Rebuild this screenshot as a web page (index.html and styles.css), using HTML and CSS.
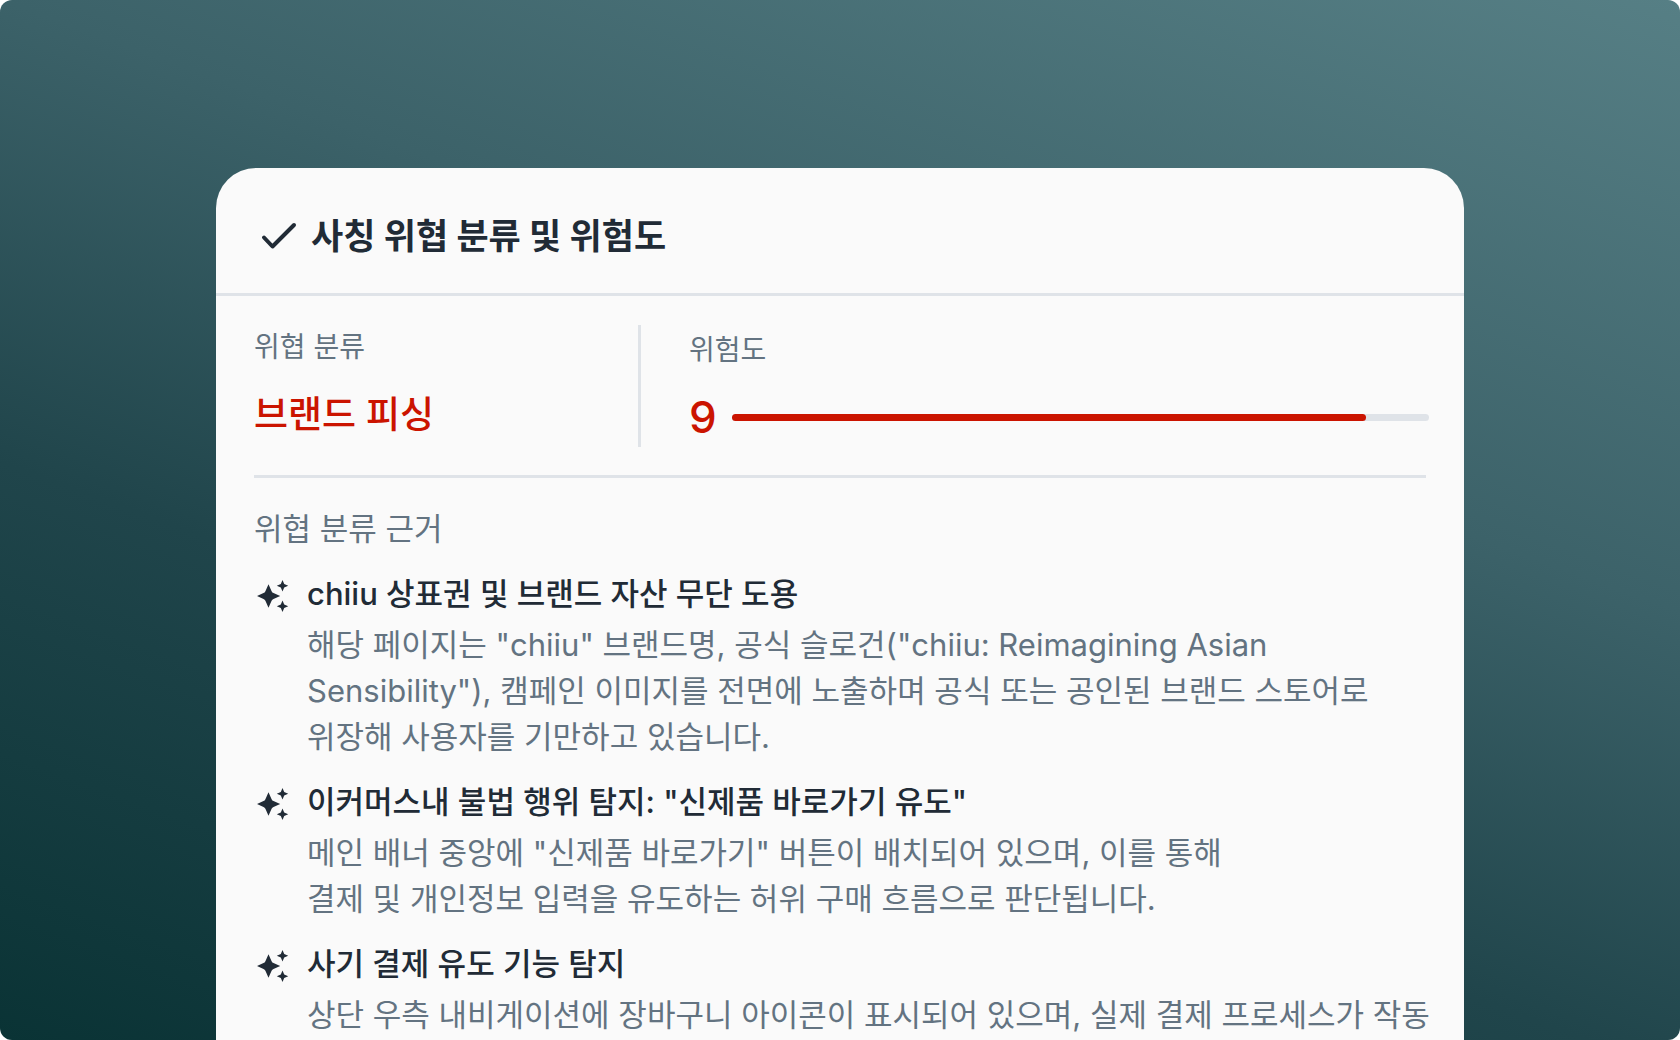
FILE: index.html
```
<!DOCTYPE html>
<html lang="ko">
<head>
    <meta charset="UTF-8">
    <meta name="viewport" content="width=device-width, initial-scale=1.0">
    <title>사칭 위협 분류 및 위험도</title>
    <link rel="stylesheet" href="styles.css">
</head>
<body>
    <svg width="0" height="0" class="sprite" aria-hidden="true">
        <symbol id="sparkle" viewBox="0 0 32 32">
            <path d="M11.500 4.300L14.600 11.200Q15.200 12.500 16.500 13.100L23.200 16L16.500 18.900Q15.200 19.500 14.600 20.800L11.500 27.700L8.400 20.800Q7.800 19.500 6.500 18.900L0 16L6.500 13.100Q7.800 12.500 8.400 11.200Z"/>
            <path d="M25.500 0L27.200 3.900L31.200 5.700L27.200 7.500L25.500 11.400L23.800 7.500L19.800 5.700L23.800 3.900Z"/>
            <path d="M25.500 20.600L27.200 24.500L31.200 26.300L27.200 28.100L25.500 32L23.800 28.100L19.800 26.300L23.800 24.500Z"/>
        </symbol>
    </svg>

    <main class="page">
        <section class="card">
            <header class="card-header">
                <svg class="check" viewBox="0 0 36 28" aria-hidden="true">
                    <path d="M3 15.500L11.500 24.500L33 3"/>
                </svg>
                <h1>사칭 위협 분류 및 위험도</h1>
            </header>

            <div class="summary">
                <div class="category">
                    <p class="label">위협 분류</p>
                    <p class="value">브랜드 피싱</p>
                </div>
                <div class="risk">
                    <p class="label">위험도</p>
                    <div class="score">
                        <span class="number">9</span>
                        <div class="bar">
                            <div class="bar-fill" style="width: 91%"></div>
                        </div>
                    </div>
                </div>
            </div>

            <div class="reasons">
                <h2>위협 분류 근거</h2>
                <ul>
                    <li>
                        <svg class="sparkle" aria-hidden="true"><use href="#sparkle"/></svg>
                        <div>
                            <h3>chiiu 상표권 및 브랜드 자산 무단 도용</h3>
                            <p>해당 페이지는 "chiiu" 브랜드명, 공식 슬로건("chiiu: Reimagining Asian<br>Sensibility"), 캠페인 이미지를 전면에 노출하며 공식 또는 공인된 브랜드 스토어로<br>위장해 사용자를 기만하고 있습니다.</p>
                        </div>
                    </li>
                    <li>
                        <svg class="sparkle" aria-hidden="true"><use href="#sparkle"/></svg>
                        <div>
                            <h3>이커머스내 불법 행위 탐지: "신제품 바로가기 유도"</h3>
                            <p>메인 배너 중앙에 "신제품 바로가기" 버튼이 배치되어 있으며, 이를 통해<br>결제 및 개인정보 입력을 유도하는 허위 구매 흐름으로 판단됩니다.</p>
                        </div>
                    </li>
                    <li>
                        <svg class="sparkle" aria-hidden="true"><use href="#sparkle"/></svg>
                        <div>
                            <h3>사기 결제 유도 기능 탐지</h3>
                            <p>상단 우측 내비게이션에 장바구니 아이콘이 표시되어 있으며, 실제 결제 프로세스가 작동</p>
                        </div>
                    </li>
                </ul>
            </div>
        </section>
    </main>
</body>
</html>
```

FILE: styles.css
```
* {
    box-sizing: border-box;
    margin: 0;
    padding: 0;
}

body {
    background-color: #fff;
    color: #212b36;
    font-family: Inter, "Noto Sans CJK KR", sans-serif;
    word-break: keep-all;
}

.sprite {
    position: absolute;
}

.page {
    display: flex;
    flex-direction: column;
    height: 100vh;
    padding: 168px 216px 0;
    overflow: hidden;
    border-radius: 12px;
    background: linear-gradient(200deg, #567f85 0%, #3c6269 37%, #20454b 65%, #0a3335 100%);
}

.card {
    flex: 1 0 auto;
    border-radius: 40px 40px 0 0;
    background-color: #fafafa;
}

.card-header {
    display: flex;
    align-items: center;
    gap: 14px;
    padding: 43px 45px 32px;
    border-bottom: 3px solid #dfe3e8;
}

.card-header h1 {
    font-size: 35px;
    font-weight: 700;
    line-height: 50px;
}

.check {
    width: 36px;
    height: 28px;
    fill: none;
    stroke: #212b36;
    stroke-width: 4;
    stroke-linecap: round;
    stroke-linejoin: round;
}

.summary {
    display: flex;
    padding: 29px 35px 28px 38px;
}

.category {
    width: 387px;
    border-right: 3px solid #dfe3e8;
}

.risk {
    flex: 1;
    padding: 3px 0 0 48px;
}

.label {
    color: #637381;
    font-size: 28px;
    line-height: 44px;
}

.value {
    margin-top: 16px;
    color: #cb1400;
    font-size: 37px;
    font-weight: 500;
    line-height: 60px;
}

.score {
    display: flex;
    align-items: center;
    gap: 15px;
    margin-top: 15px;
}

.number {
    color: #cb1400;
    font-size: 44px;
    font-weight: 500;
    line-height: 60px;
}

.bar {
    flex: 1;
    height: 7px;
    border-radius: 4px;
    background-color: #dfe3e8;
}

.bar-fill {
    height: 100%;
    border-radius: 4px;
    background-color: #cb1400;
}

.reasons {
    margin: 0 38px;
    padding-top: 28px;
    border-top: 3px solid #dfe3e8;
}

.reasons h2 {
    margin-bottom: 19px;
    color: #637381;
    font-size: 31px;
    font-weight: 400;
    line-height: 46px;
}

.reasons ul {
    display: flex;
    flex-direction: column;
    gap: 19px;
    list-style: none;
}

.reasons li {
    display: flex;
    gap: 18px;
    padding-left: 3px;
}

.sparkle {
    flex: none;
    width: 32px;
    height: 32px;
    margin-top: 9px;
    fill: #212b36;
}

.reasons h3 {
    margin-bottom: 5px;
    font-size: 31px;
    font-weight: 500;
    line-height: 46px;
}

.reasons li p {
    color: #637381;
    font-size: 31px;
    line-height: 46px;
    white-space: nowrap;
}
```
